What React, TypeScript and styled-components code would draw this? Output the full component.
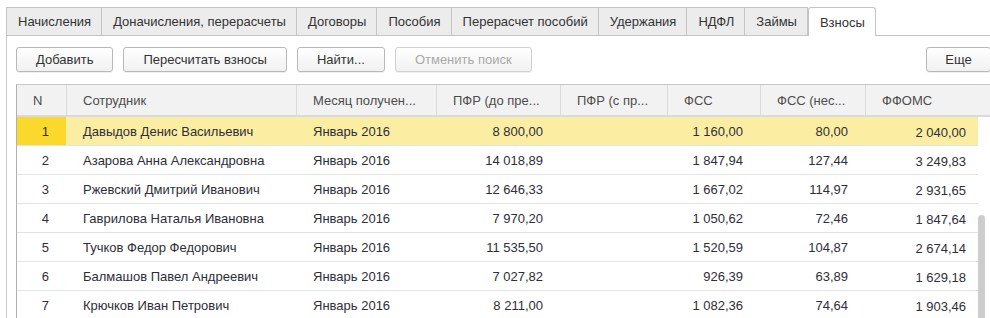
import styled, { createGlobalStyle } from 'styled-components';

const GlobalStyle = createGlobalStyle`
  html, body {
    margin: 0;
    padding: 0;
    background: #ffffff;
    overflow: hidden;
  }
  body {
    font-family: "Liberation Sans", Arial, sans-serif;
    font-size: 13px;
    color: #333333;
  }
`;

/* ── Page ── */
const Page = styled.div`
  width: 990px;
  height: 318px;
  padding: 7px 0 0 6px;
  box-sizing: border-box;
  display: flex;
  flex-direction: column;
  overflow: hidden;
`;

/* ── Tabs ── */
const TabBar = styled.div`
  display: flex;
  align-items: flex-end;
  height: 29px;
  box-sizing: border-box;
  border-bottom: 1px solid #c4c4c4;
`;

const Tab = styled.div<{ $active?: boolean }>`
  height: ${p => (p.$active ? '29px' : '28px')};
  box-sizing: border-box;
  padding: 0 10px 0 11px;
  display: flex;
  align-items: center;
  border: 1px solid #c4c4c4;
  border-left-width: ${p => (p.$active ? '1px' : '0')};
  border-bottom: none;
  border-radius: ${p => (p.$active ? '3px 3px 0 0' : '0')};
  background: ${p => (p.$active ? '#ffffff' : '#ececec')};
  margin-bottom: ${p => (p.$active ? '-1px' : '0')};
  color: #333333;
  white-space: nowrap;

  &:first-child {
    border-left-width: 1px;
  }
`;

/* ── Panel ── */
const Panel = styled.div`
  flex: 1;
  border-left: 1px solid #c8c8c8;
  padding: 11px 0 0 9px;
  display: flex;
  flex-direction: column;
  gap: 12px;
`;

const Toolbar = styled.div`
  display: flex;
  gap: 10px;
  height: 25px;
`;

const Button = styled.button<{ $disabled?: boolean }>`
  height: 25px;
  padding: 0 19px;
  border: 1px solid ${p => (p.$disabled ? '#d0d0d0' : '#b8b8b8')};
  border-radius: 3px;
  background: linear-gradient(#ffffff, #f1f1f1);
  box-shadow: 0 1px 0 rgba(0, 0, 0, 0.06);
  font-family: inherit;
  font-size: 13px;
  color: ${p => (p.$disabled ? '#a8a8a8' : '#333333')};
  white-space: nowrap;
  cursor: default;
`;

const MoreButton = styled(Button)`
  margin-left: auto;
  width: 65px;
  margin-right: -1px;
  padding: 0;
`;

/* ── Table ── */
const columns = '49px 230px 140px 124px 107px 93px 105px 1fr';

const Table = styled.div`
  flex: 1;
  border-left: 1px solid #b0b0b0;
  border-top: 1px solid #c8c8c8;
  display: flex;
  flex-direction: column;
`;

const HeaderRow = styled.div`
  display: grid;
  grid-template-columns: ${columns};
  height: 32px;
  box-sizing: border-box;
  background: #f2f2f2;
  border-bottom: 2px solid #dadada;
`;

const HeaderCell = styled.div`
  display: flex;
  align-items: center;
  padding-left: 16px;
  color: #4d4d4d;
  white-space: nowrap;
  overflow: hidden;

  & + & {
    border-left: 1px solid #dadada;
  }
`;

const Body = styled.div`
  flex: 1;
  display: flex;
`;

const Rows = styled.div`
  flex: 1;
`;

const Row = styled.div<{ $selected?: boolean }>`
  display: grid;
  grid-template-columns: ${columns};
  height: 29px;
  box-sizing: border-box;
  border-bottom: 1px solid #e3e3e3;
  background: ${p => (p.$selected ? '#fbeea3' : '#ffffff')};
`;

const Cell = styled.div<{ $align?: 'left' | 'right'; $selected?: boolean; $mark?: boolean; $shift?: boolean }>`
  display: flex;
  align-items: center;
  justify-content: ${p => (p.$align === 'right' ? 'flex-end' : 'flex-start')};
  padding: ${p => (p.$shift ? '3px 12px 0 16px' : '0 17px 0 16px')};
  background: ${p => (p.$mark ? '#fad82c' : 'transparent')};
  color: #2e2e38;
  white-space: nowrap;
  overflow: hidden;

  & + & {
    border-left: 1px solid ${p => (p.$selected ? '#ffffff' : 'transparent')};
  }
`;

const ScrollTrack = styled.div`
  width: 12px;
  padding-top: 98px;
`;

const ScrollThumb = styled.div`
  width: 7px;
  height: 110px;
  border-radius: 4px;
  background: #cdcdcd;
`;

/* ── Data ── */
const tabs = [
  'Начисления',
  'Доначисления, перерасчеты',
  'Договоры',
  'Пособия',
  'Перерасчет пособий',
  'Удержания',
  'НДФЛ',
  'Займы',
  'Взносы',
];

const headers = ['N', 'Сотрудник', 'Месяц получен...', 'ПФР (до пре...', 'ПФР (с пр...', 'ФСС', 'ФСС (нес...', 'ФФОМС'];

const rows = [
  ['Давыдов Денис Васильевич', '8 800,00', '', '1 160,00', '80,00', '2 040,00'],
  ['Азарова Анна Александровна', '14 018,89', '', '1 847,94', '127,44', '3 249,83'],
  ['Ржевский Дмитрий Иванович', '12 646,33', '', '1 667,02', '114,97', '2 931,65'],
  ['Гаврилова Наталья Ивановна', '7 970,20', '', '1 050,62', '72,46', '1 847,64'],
  ['Тучков Федор Федорович', '11 535,50', '', '1 520,59', '104,87', '2 674,14'],
  ['Балмашов Павел Андреевич', '7 027,82', '', '926,39', '63,89', '1 629,18'],
  ['Крючков Иван Петрович', '8 211,00', '', '1 082,36', '74,64', '1 903,46'],
];

export default function App() {
  return (
    <>
      <GlobalStyle />
      <Page>
        <TabBar>
          {tabs.map(t => (
            <Tab key={t} $active={t === 'Взносы'}>{t}</Tab>
          ))}
        </TabBar>

        <Panel>
          <Toolbar>
            <Button>Добавить</Button>
            <Button>Пересчитать взносы</Button>
            <Button>Найти...</Button>
            <Button $disabled>Отменить поиск</Button>
            <MoreButton>Еще</MoreButton>
          </Toolbar>

          <Table>
            <HeaderRow>
              {headers.map(h => (
                <HeaderCell key={h}>{h}</HeaderCell>
              ))}
            </HeaderRow>
            <Body>
              <Rows>
                {rows.map((r, i) => {
                  const sel = i === 0;
                  return (
                    <Row key={i} $selected={sel}>
                      <Cell $align="right" $selected={sel} $mark={sel}>{i + 1}</Cell>
                      <Cell $selected={sel}>{r[0]}</Cell>
                      <Cell $selected={sel}>Январь 2016</Cell>
                      <Cell $align="right" $selected={sel}>{r[1]}</Cell>
                      <Cell $align="right" $selected={sel}>{r[2]}</Cell>
                      <Cell $align="right" $selected={sel}>{r[3]}</Cell>
                      <Cell $align="right" $selected={sel}>{r[4]}</Cell>
                      <Cell $align="right" $selected={sel} $shift>{r[5]}</Cell>
                    </Row>
                  );
                })}
              </Rows>
              <ScrollTrack>
                <ScrollThumb />
              </ScrollTrack>
            </Body>
          </Table>
        </Panel>
      </Page>
    </>
  );
}
